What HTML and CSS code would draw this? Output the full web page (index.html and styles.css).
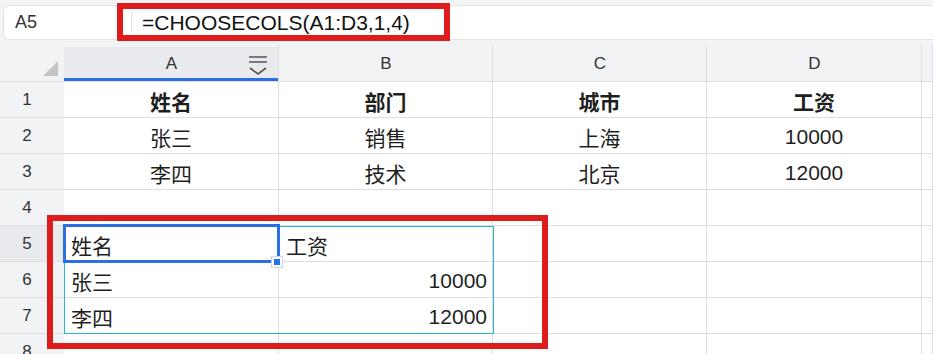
FILE: index.html
```html
<!DOCTYPE html>
<html lang="zh-CN">
<head>
    <meta charset="UTF-8">
    <meta name="viewport" content="width=device-width, initial-scale=1.0">
    <title>CHOOSECOLS</title>
    <link rel="stylesheet" href="styles.css">
</head>
<body>
    <div class="page">
        <div class="formula-bar">
            <div class="formula-box">
                <div class="name-box">A5</div>
                <div class="formula-input">=CHOOSECOLS(A1:D3,1,4)</div>
            </div>
        </div>

        <div class="sheet">
            <div class="col-head corner">
                <svg width="16" height="16" viewBox="0 0 16 16"><polygon points="0,15 15,15 15,0" fill="#c3c4c6"/></svg>
            </div>
            <div class="col-head active">A
                <svg class="filter" width="20" height="20" viewBox="0 0 20 20">
                    <path d="M1 2H19M1 7H19M2 13L10 19L18 13" fill="none" stroke="#555" stroke-width="1.6"/>
                </svg>
            </div>
            <div class="col-head">B</div>
            <div class="col-head">C</div>
            <div class="col-head">D</div>
            <div class="col-head"></div>

            <div class="row-head">1</div>
            <div class="cell center bold">姓名</div>
            <div class="cell center bold">部门</div>
            <div class="cell center bold">城市</div>
            <div class="cell center bold">工资</div>
            <div class="cell"></div>

            <div class="row-head">2</div>
            <div class="cell center">张三</div>
            <div class="cell center">销售</div>
            <div class="cell center">上海</div>
            <div class="cell center">10000</div>
            <div class="cell"></div>

            <div class="row-head">3</div>
            <div class="cell center">李四</div>
            <div class="cell center">技术</div>
            <div class="cell center">北京</div>
            <div class="cell center">12000</div>
            <div class="cell"></div>

            <div class="row-head">4</div>
            <div class="cell"></div>
            <div class="cell"></div>
            <div class="cell"></div>
            <div class="cell"></div>
            <div class="cell"></div>

            <div class="row-head active">5</div>
            <div class="cell left">姓名</div>
            <div class="cell left">工资</div>
            <div class="cell"></div>
            <div class="cell"></div>
            <div class="cell"></div>

            <div class="row-head">6</div>
            <div class="cell left">张三</div>
            <div class="cell right">10000</div>
            <div class="cell"></div>
            <div class="cell"></div>
            <div class="cell"></div>

            <div class="row-head">7</div>
            <div class="cell left">李四</div>
            <div class="cell right">12000</div>
            <div class="cell"></div>
            <div class="cell"></div>
            <div class="cell"></div>

            <div class="row-head">8</div>
            <div class="cell"></div>
            <div class="cell"></div>
            <div class="cell"></div>
            <div class="cell"></div>
            <div class="cell"></div>
        </div>

        <!-- selection and annotation overlays -->
        <div class="spill-range"></div>
        <div class="selection"></div>
        <div class="fill-handle"></div>
        <div class="mark mark-formula"></div>
        <div class="mark mark-result"></div>
    </div>
</body>
</html>
```

FILE: styles.css
```css
body {
    margin: 0;
    background-color: #f3f4f6;
    font-family: "Liberation Sans", "Noto Sans CJK SC", sans-serif;
    color: #1f1f1f;
}

.page {
    position: relative;
    width: 933px;
    height: 354px;
    overflow: hidden;
}

.formula-bar {
    height: 40px;
    padding: 5px 0 0 3px;
    box-sizing: border-box;
}

.formula-box {
    display: flex;
    align-items: center;
    height: 35px;
    box-sizing: border-box;
    background-color: #fff;
    border: 1px solid #e1e2e4;
    border-right: none;
    border-radius: 6px 0 0 6px;
}

.name-box {
    width: 128px;
    padding-left: 11px;
    box-sizing: border-box;
    font-size: 18px;
    color: #333;
    border-right: 1px solid #e1e2e4;
}

.formula-input {
    padding-left: 10px;
    font-size: 21px;
    color: #111;
}

.sheet {
    display: grid;
    grid-template-columns: 64px 215px 214px 214px 215px 1fr;
    grid-template-rows: 42px repeat(8, 36px);
    background-color: #fff;
}

.col-head {
    position: relative;
    display: flex;
    align-items: center;
    justify-content: center;
    background-color: #f2f3f5;
    border-bottom: 1px solid #dcdee1;
    font-size: 17px;
    color: #333;
    padding-top: 6px;
    box-sizing: border-box;
}

.col-head::after {
    content: "";
    position: absolute;
    right: 0;
    top: 5px;
    bottom: 0;
    width: 1px;
    background-color: #dcdee1;
}

.col-head.corner {
    justify-content: flex-end;
    align-items: flex-end;
    padding: 0 5px 4px 0;
}

.col-head.corner::after {
    display: none;
}

.col-head.active {
    background: linear-gradient(#f2f3f5 7px, #e8eaed 7px);
    box-shadow: inset 0 -3px 0 #2a6fe4;
}

.filter {
    position: absolute;
    right: 11px;
    top: 15px;
}

.row-head {
    display: flex;
    align-items: center;
    justify-content: center;
    padding-right: 10px;
    background-color: #f2f3f5;
    border-bottom: 1px solid #dcdee1;
    font-size: 17px;
    color: #333;
}

.row-head.active {
    background-color: #e8eaed;
}

.cell {
    display: flex;
    align-items: center;
    border-right: 1px solid #dcdee1;
    border-bottom: 1px solid #dcdee1;
    font-size: 21px;
    padding-top: 2px;
    box-sizing: border-box;
    white-space: nowrap;
}

.center {
    justify-content: center;
}

.left {
    padding-left: 7px;
}

.right {
    justify-content: flex-end;
    padding-right: 5px;
}

.bold {
    font-weight: bold;
}

.spill-range {
    position: absolute;
    left: 64px;
    top: 226px;
    width: 430px;
    height: 108px;
    box-sizing: border-box;
    border: 1px solid #29b4d4;
}

.selection {
    position: absolute;
    left: 63px;
    top: 224px;
    width: 217px;
    height: 39px;
    box-sizing: border-box;
    border: 3px solid #2a6fe4;
}

.fill-handle {
    position: absolute;
    left: 272px;
    top: 257px;
    width: 10px;
    height: 10px;
    box-sizing: border-box;
    background-color: #2a6fe4;
    border: 2px solid #fff;
    outline: 1px solid #c9d6ef;
}

.mark {
    position: absolute;
    box-sizing: border-box;
    border: 6px solid #df1c1c;
}

.mark-formula {
    left: 117px;
    top: 3px;
    width: 333px;
    height: 38px;
}

.mark-result {
    left: 47px;
    top: 215px;
    width: 501px;
    height: 134px;
}
```
